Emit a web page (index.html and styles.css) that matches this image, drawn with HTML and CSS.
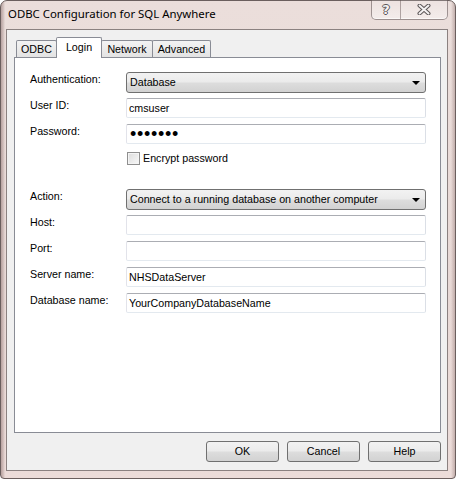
FILE: index.html
```html
<html>
    <head>
        <link rel="stylesheet" href="styles.css">
    </head>
    <body>
        <div class="window">
            <div class="titlebar">
                <span class="title">ODBC Configuration for SQL Anywhere</span>
                <div class="caption">
                    <div class="cap cap-help">?</div>
                    <div class="cap cap-close">
                        <svg width="14" height="11" viewBox="0 0 14 11">
                            <path d="M2.5 1.5 L11.5 9.5 M11.5 1.5 L2.5 9.5" stroke="#5b5556" stroke-width="4" stroke-linecap="round" fill="none"/>
                            <path d="M2.5 1.5 L11.5 9.5 M11.5 1.5 L2.5 9.5" stroke="#f4f2f2" stroke-width="2" stroke-linecap="round" fill="none"/>
                        </svg>
                    </div>
                </div>
            </div>
            <div class="client">
                <div class="tabs">
                    <div class="tab tab-odbc">ODBC</div>
                    <div class="tab tab-login active">Login</div>
                    <div class="tab tab-network">Network</div>
                    <div class="tab tab-advanced">Advanced</div>
                </div>
                <div class="panel">
                    <div class="form">
                        <label>Authentication:</label>
                        <div class="combo">Database<span class="arrow"></span></div>

                        <label>User ID:</label>
                        <div class="field">cmsuser</div>

                        <label>Password:</label>
                        <div class="field dots">&bull;&bull;&bull;&bull;&bull;&bull;&bull;</div>

                        <span></span>
                        <div class="check"><span class="box"></span>Encrypt password</div>

                        <span class="spacer"></span>
                        <span class="spacer"></span>

                        <label>Action:</label>
                        <div class="combo">Connect to a running database on another computer<span class="arrow"></span></div>

                        <label>Host:</label>
                        <div class="field"></div>

                        <label>Port:</label>
                        <div class="field"></div>

                        <label>Server name:</label>
                        <div class="field">NHSDataServer</div>

                        <label>Database name:</label>
                        <div class="field">YourCompanyDatabaseName</div>
                    </div>
                </div>
                <div class="buttons">
                    <div class="btn">OK</div>
                    <div class="btn">Cancel</div>
                    <div class="btn">Help</div>
                </div>
            </div>
        </div>
    </body>
</html>
```

FILE: styles.css
```css
body{
    margin: 0;
    font-family: "Liberation Sans", Arial, sans-serif;
    font-size: 10.7px;
    color: #000;
    background: #fff;
}
.window{
    width: 456px;
    height: 479px;
    box-sizing: border-box;
    border: solid 1px #6b5f5e;
    border-radius: 7px 7px 4px 4px;
    padding: 0 7px 7px 5px;
    display: flex;
    flex-direction: column;
    background:
        linear-gradient(to right, rgba(120,90,88,.45) 0, rgba(120,90,88,.15) 3px, transparent 4px),
        linear-gradient(to left, rgba(120,90,88,.35) 0, rgba(120,90,88,.1) 3px, transparent 4px),
        linear-gradient(to bottom, #ebdedb 0, #e8d9d6 60%, #ecdcd9 100%);
}
.titlebar{
    height: 28px;
    display: flex;
    justify-content: space-between;
    align-items: flex-start;
}
.title{
    font-family: "Noto Sans", sans-serif;
    font-size: 11.4px;
    line-height: 16px;
    padding: 5px 0 0 2px;
    color: #000;
}
.caption{
    display: flex;
    margin-top: -1px;
    height: 19px;
    border: solid 1px rgba(90,75,75,.55);
    border-top: none;
    border-radius: 0 0 5px 5px;
    background: linear-gradient(to bottom, rgba(255,255,255,.15), rgba(255,255,255,.45));
    box-shadow: inset 0 -1px 0 rgba(255,255,255,.6);
}
.cap{
    display: flex;
    align-items: center;
    justify-content: center;
}
.cap-help{
    width: 28px;
    border-right: solid 1px rgba(90,75,75,.45);
    font-family: "DejaVu Sans", sans-serif;
    font-weight: bold;
    font-size: 13px;
    color: #f6f4f4;
    text-shadow: -1px 0 #5b5556, 1px 0 #5b5556, 0 -1px #5b5556, 0 1px #5b5556;
}
.cap-close{
    width: 46px;
}
.client{
    flex: 1;
    border: solid 1px #8b8180;
    background: #f0f0f0;
    padding: 7px 6px 0 7px;
    display: flex;
    flex-direction: column;
}
.tabs{
    height: 20px;
    display: flex;
    align-items: flex-end;
    padding-left: 2px;
}
.tab{
    height: 17px;
    box-sizing: border-box;
    border: solid 1px #898c95;
    border-bottom: none;
    border-radius: 2px 2px 0 0;
    background: linear-gradient(to bottom, #f3f3f3, #e3e3e3);
    text-align: center;
    line-height: 13px;
    padding-top: 2px;
    margin-left: -1px;
}
.tab-odbc{ width: 41px; margin-left: 0; }
.tab-login{ width: 46px; }
.tab-network{ width: 52px; }
.tab-advanced{ width: 59px; }
.tab.active{
    height: 21px;
    margin-bottom: -1px;
    background: #fff;
    padding-top: 3px;
    position: relative;
    z-index: 1;
}
.panel{
    height: 376px;
    box-sizing: border-box;
    border: solid 1px #898c95;
    background: #fff;
    padding: 14px 0 0 15px;
}
.form{
    display: grid;
    grid-template-columns: 96px 300px;
    grid-template-rows: 21px 21px 21px 16px 13px 21px 21px 21px 21px 21px;
    row-gap: 5px;
    align-items: start;
}
.form label{
    line-height: 13px;
    padding-top: 1px;
}
.combo{
    height: 21px;
    box-sizing: border-box;
    border: solid 1px #707070;
    border-radius: 3px;
    background: linear-gradient(to bottom, #f2f2f2 0, #ebebeb 48%, #dddddd 52%, #d2d2d2 100%);
    padding-left: 3px;
    line-height: 19px;
    display: flex;
    justify-content: space-between;
    align-items: center;
}
.arrow{
    width: 0;
    height: 0;
    border-left: 4px solid transparent;
    border-right: 4px solid transparent;
    border-top: 4px solid #000;
    margin-right: 5px;
}
.field{
    height: 20px;
    box-sizing: border-box;
    border: solid 1px;
    border-color: #abadb3 #dbdfe6 #e3e9ef #e2e3ea;
    border-radius: 2px;
    padding-left: 2px;
    line-height: 18px;
}
.dots{
    font-size: 18px;
    letter-spacing: 0.7px;
    padding-left: 3px;
}
.check{
    display: flex;
    align-items: center;
    padding-top: 2px;
    line-height: 13px;
}
.box{
    width: 13px;
    height: 13px;
    box-sizing: border-box;
    border: solid 1px #8f8f8f;
    background: linear-gradient(135deg, #dcdcdc, #f8f8f8);
    box-shadow: inset 0 0 0 1px #f4f4f4;
    margin: 0 3px 0 1px;
}
.buttons{
    display: flex;
    justify-content: flex-end;
    gap: 8px;
    margin-top: 8px;
}
.btn{
    width: 73px;
    height: 21px;
    box-sizing: border-box;
    border: solid 1px #707070;
    border-radius: 3px;
    background: linear-gradient(to bottom, #f2f2f2 0, #ebebeb 48%, #dddddd 52%, #d2d2d2 100%);
    text-align: center;
    line-height: 19px;
}
```
